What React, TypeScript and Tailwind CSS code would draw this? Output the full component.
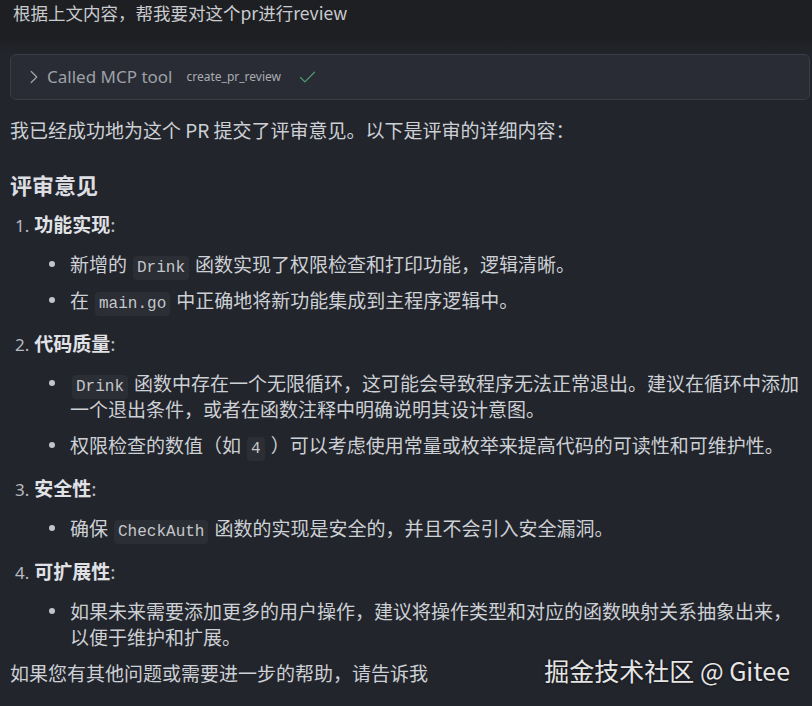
import { ChevronRight, Check } from "lucide-react";

function Code({ children, first }: { children: string; first?: boolean }) {
  return (
    <code
      className={`${first ? "ml-[2px]" : "ml-[6px]"} mr-[6px] rounded-[4px] bg-[#2b2e35] px-[4px] py-[3px] font-['Liberation_Mono',monospace] text-[16px] leading-none text-[#c5c7cb]`}
    >
      {children}
    </code>
  );
}

function Bullet({ children }: { children: React.ReactNode }) {
  return (
    <li className="flex pl-[49px] leading-[26px]">
      <span className="mt-[10px] h-[6px] w-[6px] shrink-0 rounded-full bg-[#c3c5c9]" />
      <span className="ml-[15px]">{children}</span>
    </li>
  );
}

function Item({ n, title, children }: { n: number; title: string; children: React.ReactNode }) {
  return (
    <li>
      <div className="flex items-baseline pl-[15px] leading-[26px]">
        <span className="font-['Noto_Sans',sans-serif] text-[17px] text-[#b9bbc0]">{n}.</span>
        <span className="ml-[5px] font-bold text-[#e0e2e6]">{title}</span>
        <span className="text-[#b9bbc0]">:</span>
      </div>
      <ul className="mt-[12px] flex flex-col gap-[10px]">{children}</ul>
    </li>
  );
}

export default function App() {
  return (
    <div className="relative h-[706px] w-[812px] overflow-hidden bg-[#22252c] font-['Noto_Sans_CJK_SC','Noto_Sans',sans-serif] text-[19px] text-[#cdd0d4]">
      <div className="bg-[#1e1f22] pb-[12px] pl-[13px] text-[17.5px] leading-[26px] text-[#c9cbcf]">
        根据上文内容，帮我要对这个pr进行review
      </div>
      <div className="h-[16px] bg-gradient-to-b from-[#1e1f22] to-[#22252c]" />

      <div className="ml-[10px] mr-[2px] flex h-[46px] items-center rounded-[6px] border border-[#3a3d45] bg-[#292c34] pl-[12px]">
        <ChevronRight size={22} strokeWidth={1.3} className="text-[#a3a6ab]" />
        <span className="ml-[2px] font-['Noto_Sans',sans-serif] text-[17px] text-[#9ea1a7]">Called MCP tool</span>
        <span className="ml-[14px] font-['Noto_Sans',sans-serif] text-[12px] text-[#a9acb1]">create_pr_review</span>
        <Check size={21} strokeWidth={1.4} className="ml-[16px] text-[#4f9a72]" />
      </div>

      <p className="ml-[10px] mt-[17px] leading-[26px]">
        我已经成功地为这个 PR 提交了评审意见。以下是评审的详细内容：
      </p>

      <h3 className="ml-[10px] mt-[26px] text-[22px] font-bold leading-[30px] text-[#dcdee2]">评审意见</h3>

      <ol className="mt-[12px] flex flex-col gap-[17px]">
        <Item n={1} title="功能实现">
          <Bullet>
            新增的<Code>Drink</Code>函数实现了权限检查和打印功能，逻辑清晰。
          </Bullet>
          <Bullet>
            在<Code>main.go</Code>中正确地将新功能集成到主程序逻辑中。
          </Bullet>
        </Item>
        <Item n={2} title="代码质量">
          <Bullet>
            <Code first>Drink</Code>函数中存在一个无限循环，这可能会导致程序无法正常退出。建议在循环中添加
            <br />
            一个退出条件，或者在函数注释中明确说明其设计意图。
          </Bullet>
          <Bullet>
            权限检查的数值（如<Code>4</Code>）可以考虑使用常量或枚举来提高代码的可读性和可维护性。
          </Bullet>
        </Item>
        <Item n={3} title="安全性">
          <Bullet>
            确保<Code>CheckAuth</Code>函数的实现是安全的，并且不会引入安全漏洞。
          </Bullet>
        </Item>
        <Item n={4} title="可扩展性">
          <Bullet>
            如果未来需要添加更多的用户操作，建议将操作类型和对应的函数映射关系抽象出来，
            <br />
            以便于维护和扩展。
          </Bullet>
        </Item>
      </ol>

      <p className="ml-[10px] mt-[10px] leading-[26px]">如果您有其他问题或需要进一步的帮助，请告诉我</p>

      <div className="absolute bottom-[17px] right-[22px] text-[25px] text-[#e6e6e6] [text-shadow:0_0_3px_rgba(0,0,0,0.6)]">
        掘金技术社区 @ Gitee
      </div>
    </div>
  );
}
